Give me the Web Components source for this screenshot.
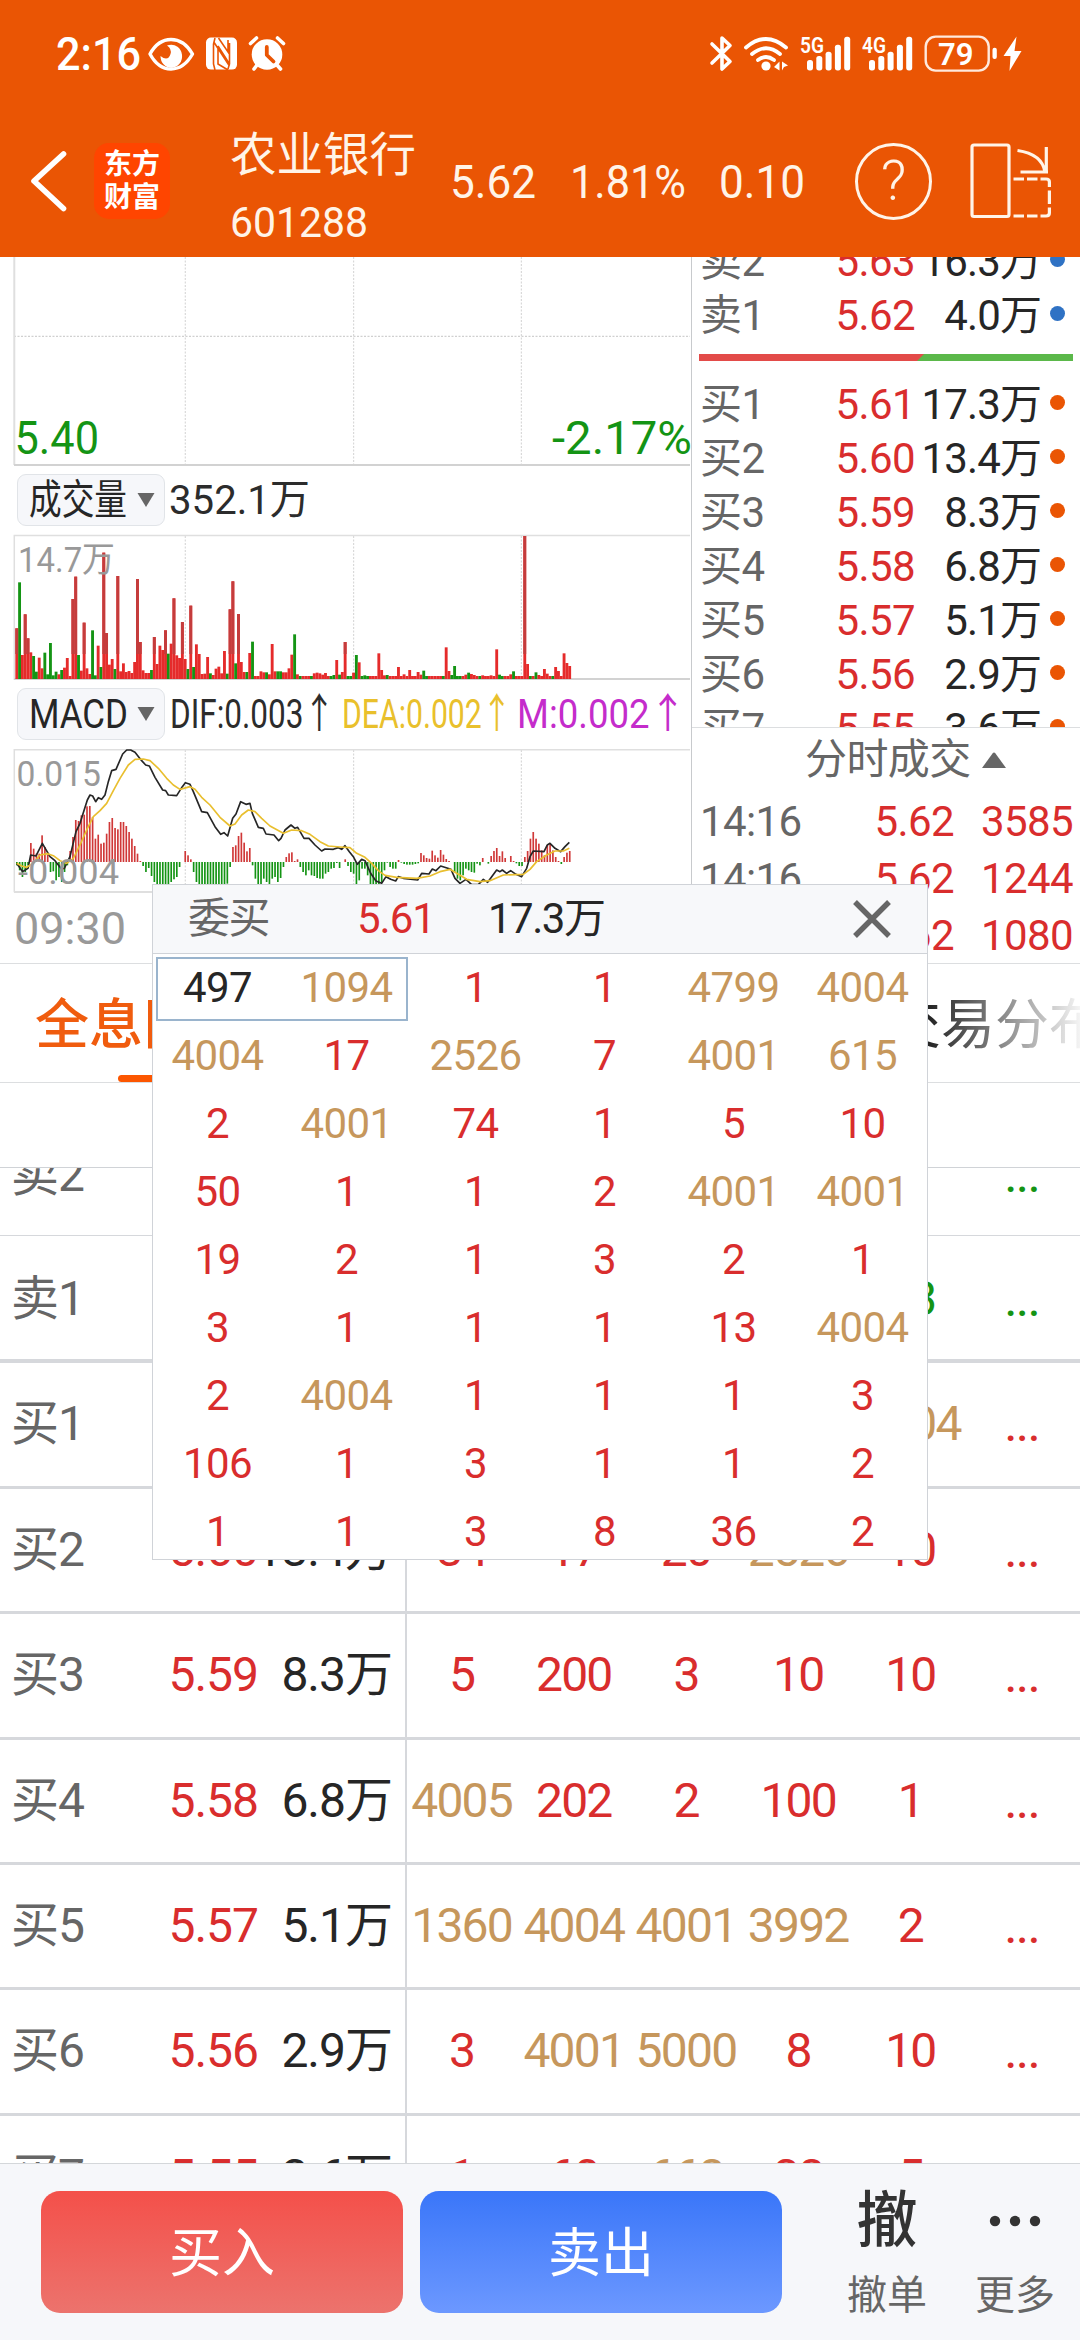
<!DOCTYPE html>
<html lang="zh-CN">
<head>
<meta charset="utf-8">
<title>农业银行 601288</title>
<style>
  html, body {
    margin: 0;
    padding: 0;
  }
  body {
    width: 1080px;
    height: 2340px;
    overflow: hidden;
    background: #fff;
    color: #262626;
    font-family: Roboto, "Noto Sans CJK SC", sans-serif;
    --red: #d92d2d;
    --green: #149414;
    --gold: #c6975c;
    --gray: #666;
    --orange: #ea5504;
    --line: #d6d8dc;
  }
</style>
</head>
<body>
<stock-page></stock-page>

<script>
// text squeezed or stretched to a given advance width
class FitText extends HTMLElement {
  constructor() {
    super();
    this.attachShadow({ mode: "open" });
  }

  connectedCallback() {
    this.shadowRoot.innerHTML = `
      <style>
        :host { display: inline-block; white-space: nowrap; text-align: left; }
        span { display: inline-block; transform-origin: 0 50%; }
      </style>
      <span><slot></slot></span>`;
    const width = Number(this.getAttribute("w"));
    const span = this.shadowRoot.querySelector("span");
    this.style.width = width + "px";
    const natural = span.getBoundingClientRect().width;
    if (natural) span.style.transform = `scaleX(${width / natural})`;
  }
}
customElements.define("fit-text", FitText);

class StatusBar extends HTMLElement {
  constructor() {
    super();
    this.attachShadow({ mode: "open" });
  }

  signal(x, label) {
    const tops = [60, 56, 51.7, 44.7, 36.7];
    const bars = tops
      .map((y, i) => `<rect x="${x + 7 + i * 9.3}" y="${y}" width="6" height="${70.4 - y}" rx="2.6"/>`)
      .join("");
    return `<text x="${x}" y="53" font-size="22.5" font-weight="600" textLength="24" lengthAdjust="spacingAndGlyphs">${label}</text>${bars}`;
  }

  connectedCallback() {
    this.shadowRoot.innerHTML = `
      <style>
        :host { display: flex; height: 107px; color: #fff; }
        .time { padding-left: 56px; font-size: 46px; line-height: 109px; font-weight: 500; }
        svg { display: block; fill: #fff; font-family: Roboto, sans-serif; }
        .left { width: 150px; }
        .right { margin-left: auto; }
      </style>
      <span class="time"><fit-text w="85">2:16</fit-text></span>
      <svg class="left" height="107" viewBox="141 0 150 107">
        <path d="M150 54 Q158 39.5 171 39.5 Q184 39.5 192.500 54 Q184 69 171 69 Q158 69 150 54Z" fill="none" stroke="#fff" stroke-width="3.4" stroke-linejoin="round"/>
        <path d="M169 45 A10.800 11.500 0 1 1 160.500 56 Q168 62 170.500 54 Q172 49 167 45.500Z"/>
        <rect x="206" y="37.600" width="31" height="32" rx="5"/>
        <path d="M215 38 L213.500 44 V64 L215 70 M213.800 42 L229.500 66 M229.500 43 V64 L228 69 M218 46 V64 L228 70 M229.500 64 L218 46 M218.500 38 L228 52 V40" fill="none" stroke="#ea5504" stroke-width="1.600"/>
        <circle cx="267" cy="54.500" r="15.300"/>
        <path d="M250.500 43.500 L256.500 38 M283.500 43.500 L277.500 38 M257 65 L254 69 M277 65 L280.500 69" stroke="#fff" stroke-width="3.600" stroke-linecap="round"/>
        <path d="M266.800 47 V55 L273.500 61.500" fill="none" stroke="#ea5504" stroke-width="3.800" stroke-linecap="round" stroke-linejoin="round"/>
      </svg>
      <svg class="right" width="380" height="107" viewBox="700 0 380 107">
        <path d="M712 44 L730 61.500 L722 69 V38 L730 45.500 L712 63" fill="none" stroke="#fff" stroke-width="3.600" stroke-linejoin="round" stroke-linecap="round"/>
        <path d="M746 47.500 Q766 30.500 786 47.500 M752 54 Q766 42.500 780 54 M758 60 Q766 54 774 60" fill="none" stroke="#fff" stroke-width="3.800" stroke-linecap="round"/>
        <circle cx="766" cy="66" r="4.600"/>
        <path d="M779.500 61.500 V70.500 L774 67Z M782 61.500 L788 65.500 L784 67 L782 70.500Z"/>
        ${this.signal(800, "5G")}
        ${this.signal(862, "4G")}
        <rect x="925.700" y="36.600" width="63" height="34" rx="10" fill="none" stroke="#ffe9dc" stroke-width="2.400"/>
        <rect x="992.500" y="47.700" width="4.300" height="11.300" rx="2"/>
        <text x="938" y="64.700" font-size="31" font-weight="600" textLength="35.500" lengthAdjust="spacingAndGlyphs">79</text>
        <path d="M1016.500 36.500 L1003.500 56 H1010.500 L1009.500 71 L1021.500 51 H1014.500Z"/>
      </svg>`;
  }
}
customElements.define("status-bar", StatusBar);

class StockTitle extends HTMLElement {
  constructor() {
    super();
    this.attachShadow({ mode: "open" });
  }

  connectedCallback() {
    this.shadowRoot.innerHTML = `
      <style>
        :host { display: flex; align-items: center; height: 150px; box-sizing: border-box; padding-bottom: 2px; color: #fff4e8; }
        svg { display: block; flex: none; }
        .back { margin-left: 30px; }
        .logo {
          display: flex; flex-direction: column; align-items: center; justify-content: center;
          width: 76px; height: 76px; margin-left: 26px; border-radius: 15px;
          background: #ff4500; color: #fff;
          font: 700 28px/33px "Noto Sans CJK SC", sans-serif;
        }
        .logo span { position: relative; top: -2px; }
        .name { width: 186px; margin-left: 60px; font-size: 46.5px; line-height: 68px; padding-top: 13px; }
        .code { font-size: 43px; line-height: 66px; }
        .quote { display: flex; margin-left: 34px; font-size: 47px; gap: 33.500px; }
        .help {
          display: flex; align-items: center; justify-content: center; box-sizing: border-box;
          width: 77px; height: 77px; margin-left: 50px; border: 3px solid #fff4e8; border-radius: 50%;
          font-size: 56px; font-weight: 300;
        }
        .turn { margin-left: 37px; }
      </style>
      <svg class="back" width="38" height="62" viewBox="0 0 38 62" fill="none" stroke="#fff" stroke-width="5.600" stroke-linecap="round" stroke-linejoin="round">
        <path d="M33.500 4 L4 31 L33.500 58.500"/>
      </svg>
      <div class="logo"><span>东方</span><span>财富</span></div>
      <div class="name">
        <div>农业银行</div>
        <div class="code"><fit-text w="138">601288</fit-text></div>
      </div>
      <div class="quote">
        <fit-text w="86">5.62</fit-text>
        <fit-text w="116">1.81%</fit-text>
        <fit-text w="86">0.10</fit-text>
      </div>
      <div class="help">?</div>
      <svg class="turn" width="84" height="78" viewBox="969 142 84 78" fill="none" stroke="#fff4e8" stroke-width="3.200">
        <rect x="972" y="145" width="37" height="71.500" rx="2"/>
        <path d="M1017.500 150.500 Q1042 154 1045 172 M1046.300 147 V173.500 M1020.500 172 H1048"/>
        <path d="M1013.500 179 H1024 M1027 179 H1037.500 M1040.500 179 H1046 Q1049.400 179 1049.400 182 V187 M1049.400 190.500 V204 M1049.400 207.500 V213 Q1049.400 216 1046 216 H1040.500 M1037.500 216 H1027 M1024 216 H1013.500"/>
      </svg>`;
  }
}
customElements.define("stock-title", StockTitle);

// minute volume, one value per bar; a negative value is a falling minute
const VOLUME = (() => {
  const v = {
    0: 152, 1: -290, 2: 72, 3: 194, 4: 122, 5: 80, 6: -69, 7: -22, 8: 64, 9: 32, 10: -79, 11: -14, 12: -108,
    13: -11, 14: -22, 15: 14, 16: -27, 17: 34, 18: 63, 20: 240, 21: 307, 22: -72, 23: 25, 24: 169, 25: 32, 26: 15,
    27: -146, 28: -11, 29: 100, 30: -36, 31: 379, 32: 138, 33: 43, 34: 60, 35: -30, 36: 309, 37: 23, 38: 47, 39: 21,
    40: 24, 41: 18, 42: 51, 43: 300, 44: 111, 45: 26, 46: 18, 47: 18, 48: -27, 49: 126, 50: 45, 51: 100, 52: 87,
    53: 146, 54: -76, 55: 106, 56: 242, 57: 71, 58: 63, 59: 171, 60: 60, 61: -30, 62: 220, 63: -36, 64: 104, 65: 75,
    66: 15, 67: 16, 68: 66, 69: -17, 70: 12, 71: 31, 72: 37, 73: 17, 74: 84, 75: -16, 76: 209, 77: 293, 78: -47,
    79: 195, 80: 51, 81: 21, 82: -21, 83: 78, 84: -112, 87: 23, 88: 20, 89: -20, 90: 14, 91: 105, 92: 23, 93: -23,
    94: -23, 95: 20, 96: 20, 97: 32, 98: 73, 99: -134, 100: 14, 101: -9, 105: -9, 106: 17, 107: 19, 108: 17, 109: 13,
    110: 18, 112: -9, 113: -12, 114: 57, 115: -13, 116: 21, 117: 111, 118: -9, 119: -9, 120: 19, 121: -72, 122: 50,
    123: -9, 124: -11, 125: -9, 129: 77, 130: 27, 131: 11, 132: -12, 136: 36, 138: 14, 140: 27, 143: 21, 144: 13,
    145: -25, 146: -9, 152: -9, 153: 95, 154: 24, 155: -12, 156: -39, 157: -9, 158: -9, 160: 13, 161: -19, 162: 15,
    163: 12, 165: -9, 166: 11, 169: 11, 171: 89, 172: -13, 173: -9, 176: 14, 177: -23, 181: 429, 182: 45, 183: -9,
    185: -20, 186: 12, 188: 30, 189: 16, 191: -9, 192: 36, 193: 24, 195: 77, 196: 48, 197: 39
  };
  return Array.from({ length: 198 }, (_, i) => v[i] || 9);
})();

const MACD = [
  -10, -25, -45, -30, -10, 57, 40, 25, 25, 80, 45, 22, -30, -28, -55, -45, -60, -30, -10, 33,
  75, 126, 123, 140, 142, 167, 168, 135, 70, 82, 55, 58, 85, 120, 132, 102, 98, 120, 120, 108,
  90, 70, 48, 25, 3, -12, -30, -18, -42, -60, -70, -70, -70, -70, -70, -60, -52, -45, -15, 0,
  33, 20, 8, -30, -60, -70, -70, -70, -70, -70, -70, -70, -70, -70, -70, -65, -15, 45, 50, 78,
  88, 58, 32, 42, -10, -50, -66, -66, -50, -60, -66, -50, -45, -60, -48, -15, 15, 26, 29, 3,
  8, -15, -30, -40, -25, -40, -42, -48, -50, -50, -35, -30, -20, -18, -3, -18, 0, 8, -12, -30,
  -35, -70, -55, -20, -20, -40, -70, -70, -70, -70, -60, -25, -2, -15, -20, -20, 6, -2, -6, -8,
  -8, -8, -6, -4, 27, 20, 12, 10, 34, 20, 13, 36, 22, 9, 3, 0, -30, -50, -55, -40,
  -20, -25, -30, -32, -5, -10, 12, 0, -5, 18, 33, 42, 18, 32, 12, 0, 18, 3, -4, -12,
  -12, 15, 33, 70, 90, 70, 55, 35, 20, 50, 55, 35, 15, 3, -6, 15, 28, 33
];

const DIF = "50,1030 68,1055 84,1045 92,1005 108,1008 127,970 150,1010 165,1022 185,1048 193,1045 210,1010 228,935 240,910 262,840 270,825 278,828 287,845 295,833 305,838 315,825 325,785 335,752 348,748 368,702 380,690 392,690 405,697 425,722 437,735 448,738 465,772 488,810 497,812 505,825 530,827 547,800 556,788 570,793 580,815 605,875 622,878 645,920 662,943 672,938 683,948 698,895 708,882 722,845 738,853 750,850 757,880 775,922 790,925 798,942 822,945 836,962 843,955 855,930 873,915 885,925 893,922 912,955 927,955 945,975 965,993 975,987 1000,988 1015,983 1025,988 1035,977 1048,995 1060,1010 1072,1033 1085,1018 1095,1022 1112,1060 1128,1083 1145,1090 1158,1070 1172,1078 1187,1083 1195,1070 1210,1075 1253,1080 1265,1060 1287,1062 1297,1047 1308,1052 1322,1038 1353,1048 1365,1075 1380,1090 1398,1078 1415,1094 1435,1094 1450,1078 1463,1087 1490,1050 1500,1055 1507,1050 1520,1060 1532,1052 1548,1063 1565,1070 1580,1045 1590,1010 1600,993 1632,995 1642,975 1650,970 1665,985 1682,995 1695,980 1708,967";
const DEA = "50,1030 65,1038 80,1042 100,1030 120,1005 143,1001 160,1007 180,1022 200,1030 220,1015 240,975 260,930 280,890 300,872 320,850 340,812 360,775 385,735 405,718 430,717 450,722 475,745 500,775 520,795 540,808 570,800 585,808 605,832 630,855 660,892 690,918 705,912 725,885 745,870 765,875 785,895 810,918 850,940 875,930 905,932 930,943 960,965 985,978 1020,981 1050,983 1070,1000 1095,1012 1115,1030 1135,1052 1155,1066 1190,1072 1250,1075 1290,1068 1320,1055 1350,1048 1370,1060 1400,1078 1440,1085 1470,1082 1510,1065 1570,1063 1590,1048 1610,1025 1640,1005 1665,993 1690,993 1708,985";

const STEP = 8.42;

class MinuteChart extends HTMLElement {
  constructor() {
    super();
    this.attachShadow({ mode: "open" });
  }

  grid(top, bottom) {
    return [185.3, 353.6, 521.4]
      .map(x => `<path d="M${x} ${top} V${bottom}" stroke="#d9d9d9" stroke-width="1.200" stroke-dasharray="2 1.500"/>`)
      .join("");
  }

  connectedCallback() {
    // bars are kept in thirds of a pixel
    const volume = VOLUME.map((v, i) =>
      `<rect x="${46 + i * STEP}" y="${432 - Math.abs(v)}" width="8.600" height="${Math.abs(v)}" fill="${v < 0 ? "#149414" : "#e52b2b"}"/>`).join("");
    const spikes = VOLUME.map((v, i) => v > 110
      ? `<rect x="${46 + i * STEP}" y="${432 - v}" width="8.600" height="${v - 75}" fill="#c43c3c"/>` : "").join("");
    const macd = MACD.map((v, i) =>
      `<rect x="${48 + i * STEP}" y="${v < 0 ? 1026 : 1026 - v}" width="5" height="${Math.abs(v)}" fill="${v < 0 ? "#149414" : "#d03838"}"/>`).join("");

    this.shadowRoot.innerHTML = `
      <style>
        :host { display: block; width: 691px; }
        svg { display: block; }
        svg text { font-family: Roboto, "Noto Sans CJK SC", sans-serif; }
        .bar { display: flex; align-items: center; height: 70px; box-sizing: border-box; padding-left: 17px; font-size: 41px; line-height: 52px; color: #2c2c2c; }
        .pill {
          display: flex; align-items: center; box-sizing: border-box; width: 148px; height: 52px; padding: 0 9px 0 11px;
          justify-content: space-between; border: 1px solid #e1e4e8; border-radius: 9px; background: #f6f7fa; color: #262626;
        }
        .pill svg { fill: #666; }
        .value { margin-left: 4px; }
        .dif { margin-left: 5px; }
        .dea { margin-left: 7px; color: #e9c02c; }
        .m { margin-left: 5px; color: #c42ccb; }
        .time { padding-left: 14px; font-size: 44px; line-height: 72px; color: #999; }
      </style>
      <svg width="691" height="208" viewBox="0 257 691 208" overflow="visible">
        ${this.grid(257, 465)}
        <path d="M14 336.300 H690" stroke="#d0d0d0" stroke-width="1.200" stroke-dasharray="2 1.500"/>
        <path d="M14.300 257 V465" stroke="#dfdfdf" stroke-width="2"/>
        <path d="M14 465 H690" stroke="#d2d2d2" stroke-width="2"/>
        <g fill="#149414" font-size="45.500">
          <text x="14.500" y="453.500" textLength="84.500" lengthAdjust="spacingAndGlyphs">5.40</text>
          <text x="552" y="453.500" textLength="140" lengthAdjust="spacingAndGlyphs">-2.17%</text>
        </g>
      </svg>
      <div class="bar">
        <div class="pill">
          <fit-text w="98">成交量</fit-text>
          <svg width="18" height="14"><path d="M0.500 0 H17.500 L9 14Z"/></svg>
        </div>
        <fit-text class="value" w="141">352.1万</fit-text>
      </div>
      <svg width="691" height="144" viewBox="0 535 691 144" overflow="visible">
        ${this.grid(536, 679)}
        <path d="M14.300 680 V535.500 H690" fill="none" stroke="#dfdfdf" stroke-width="1.500"/>
        <path d="M14 679 H690" stroke="#d2d2d2" stroke-width="1.800"/>
        <g transform="translate(0 535) scale(.33333)">${volume}${spikes}</g>
        <text x="18" y="571.700" font-size="35" fill="#999" textLength="97" lengthAdjust="spacingAndGlyphs">14.7万</text>
      </svg>
      <div class="bar">
        <div class="pill">
          <fit-text w="99">MACD</fit-text>
          <svg width="18" height="14"><path d="M0.500 0 H17.500 L9 14Z"/></svg>
        </div>
        <fit-text class="dif" w="165">DIF:0.003↑</fit-text>
        <fit-text class="dea" w="170">DEA:0.002↑</fit-text>
        <fit-text class="m" w="169">M:0.002↑</fit-text>
      </div>
      <svg width="691" height="144" viewBox="0 749 691 144">
        ${this.grid(750, 893)}
        <path d="M14.300 892.300 V749.800 H690" fill="none" stroke="#dfdfdf" stroke-width="1.500"/>
        <path d="M14 892 H690" stroke="#dfdfdf" stroke-width="1.800"/>
        <g transform="translate(0 520) scale(.33333)">
          ${macd}
          <polyline points="${DIF}" fill="none" stroke="#262626" stroke-width="5" stroke-linejoin="round"/>
          <polyline points="${DEA}" fill="none" stroke="#e9bf2f" stroke-width="5" stroke-linejoin="round"/>
        </g>
        <g font-size="35" fill="#999">
          <text x="16.500" y="786" textLength="84.500" lengthAdjust="spacingAndGlyphs">0.015</text>
          <text x="18" y="884" textLength="101" lengthAdjust="spacingAndGlyphs">-0.004</text>
        </g>
      </svg>
      <div class="time"><fit-text w="112">09:30</fit-text></div>`;
  }
}
customElements.define("minute-chart", MinuteChart);

class OrderBook extends HTMLElement {
  constructor() {
    super();
    this.attachShadow({ mode: "open" });
  }

  row([label, price, amount]) {
    const side = label[0] === "卖" ? "sell" : "buy";
    return `<div class="row ${side}"><span class="label">${label}</span><b>${price}</b><span class="amount">${amount}</span><i></i></div>`;
  }

  connectedCallback() {
    const sell = [["卖2", "5.63", "16.3万"], ["卖1", "5.62", "4.0万"]];
    const buy = [["买1", "5.61", "17.3万"], ["买2", "5.60", "13.4万"], ["买3", "5.59", "8.3万"], ["买4", "5.58", "6.8万"],
      ["买5", "5.57", "5.1万"], ["买6", "5.56", "2.9万"], ["买7", "5.55", "3.6万"]];
    const trades = [["14:16", "5.62", "3585"], ["14:16", "5.62", "1244"], ["14:16", "5.62", "1080"]];

    this.shadowRoot.innerHTML = `
      <style>
        :host { display: block; width: 388px; border-left: 1px solid #c8cacd; font-size: 42px; letter-spacing: -.6px; white-space: nowrap; }
        b { font-weight: 400; color: var(--red); text-align: right; }
        .book { height: 470px; overflow: hidden; border-bottom: 1px solid #dcdee0; }
        .sells { margin-top: -23px; }
        .row { display: grid; grid-template-columns: 112px 103px 125px 1fr; height: 54px; line-height: 55px; padding-left: 8px; }
        .label { color: var(--gray); }
        .amount { text-align: right; margin-right: -1px; }
        .row .amount { letter-spacing: -.9px; }
        i { width: 15px; height: 15px; border-radius: 50%; margin: 18px 0 0 10px; background: #ea5504; }
        .sell i { background: #2f72c4; }
        .ratio { height: 7px; margin: 12px 7px 16px 7px; background: #5bb84a; }
        .ratio div { width: 225px; height: 7px; background: #e34b49; clip-path: polygon(0 0, 100% 0, 218px 100%, 0 100%); }
        .head { display: flex; align-items: center; height: 64px; padding-left: 113px; gap: 11px; color: var(--gray); }
        .head span { line-height: 64px; }
        .trade { display: grid; grid-template-columns: 112px 142px 1fr; height: 57px; line-height: 59px; padding: 0 7px 0 8px; }
        .trade span { color: var(--gray); }
      </style>
      <div class="book">
        <div class="sells">${sell.map(this.row).join("")}</div>
        <div class="ratio"><div></div></div>
        ${buy.map(this.row).join("")}
      </div>
      <div class="head"><span>分时成交</span><svg width="24" height="16" fill="#666"><path d="M0 16 L10.500 1.500 Q12 -.5 13.500 1.500 L24 16Z"/></svg></div>
      ${trades.map(([t, p, n]) => `<div class="trade"><span>${t}</span><b>${p}</b><b>${n}</b></div>`).join("")}`;
  }
}
customElements.define("order-book", OrderBook);

class TabStrip extends HTMLElement {
  constructor() {
    super();
    this.attachShadow({ mode: "open" });
  }

  connectedCallback() {
    this.shadowRoot.innerHTML = `
      <style>
        :host {
          display: flex; justify-content: space-between; position: relative; height: 120px; box-sizing: border-box;
          border-top: 1px solid #dcdee0; border-bottom: 1px solid #dcdee0; overflow: hidden;
          font-size: 54px; line-height: 124px; color: #262626; white-space: nowrap;
        }
        .tab { display: flex; flex-direction: column; align-items: center; margin-left: 35px; height: 118px; color: #f05c0e; font-weight: 500; }
        .tab span { height: 111px; }
        .tab i { width: 50px; height: 7px; border-radius: 4px; background: #fc5600; }
        .next { margin-right: -23px; }
        .fade { position: absolute; right: 0; top: 0; width: 150px; height: 118px; background: linear-gradient(to right, rgba(255,255,255,0), rgba(255,255,255,.95)); }
      </style>
      <div class="tab"><span>全息队列</span><i></i></div>
      <div class="next">交易分布</div>
      <div class="fade"></div>`;
  }
}
customElements.define("tab-strip", TabStrip);

class QueueTable extends HTMLElement {
  constructor() {
    super();
    this.attachShadow({ mode: "open" });
  }

  connectedCallback() {
    const rows = [
      ["卖2", "", "", ["", "", "", "", ""]],
      ["卖1", "", "", ["", "", "", "", "13"]],
      ["买1", "", "", ["", "", "", "", "4004"]],
      ["买2", "5.60", "13.4万", ["34", "17", "20", "2526", "10"]],
      ["买3", "5.59", "8.3万", ["5", "200", "3", "10", "10"]],
      ["买4", "5.58", "6.8万", ["4005", "202", "2", "100", "1"]],
      ["买5", "5.57", "5.1万", ["1360", "4004", "4001", "3992", "2"]],
      ["买6", "5.56", "2.9万", ["3", "4001", "5000", "8", "10"]],
      ["买7", "5.55", "3.6万", ["1", "60", "668", "28", "5"]]
    ];
    const cell = n => `<span class="${n >= 500 ? "big" : ""}">${n}</span>`;

    this.shadowRoot.innerHTML = `
      <style>
        :host { display: block; height: 1080px; overflow: hidden; font-size: 48px; letter-spacing: -1px; white-space: nowrap; }
        .space { height: 84px; border-bottom: 1px solid #d0d3d7; }
        .list { height: 995px; overflow: hidden; }
        .row {
          display: grid; grid-template-columns: 11px 146px 101px 134px 15px repeat(5, 112.2px) 1fr;
          height: 125.4px; line-height: 121px; box-sizing: border-box; border-bottom: 3px solid var(--line);
        }
        .row:first-child { margin-top: -57px; border-bottom-width: 1px; line-height: 127px; }
        .row:nth-child(2) { border-bottom-width: 4px; height: 127px; line-height: 125px; }
        .label { color: var(--gray); grid-column: 2; }
        .price { color: var(--red); text-align: right; }
        .amount { display: flex; justify-content: flex-end; }
        .edge { border-right: 2px solid var(--line); margin-bottom: -3px; }
        .q { display: contents; color: var(--red); }
        .q span { text-align: center; letter-spacing: -1.800px; margin-left: -3px; }
        .q .big { color: var(--gold); }
        .sell .q { color: var(--green); }
        .q .more { font-size: 42px; font-weight: 500; letter-spacing: 0; padding-top: 3px; }
      </style>
      <div class="space"></div>
      <div class="list">${rows.map(([label, price, amount, q]) => `
        <div class="row ${label[0] === "卖" ? "sell" : ""}">
          <span class="label">${label}</span><span class="price">${price}</span><span class="amount">${amount}</span>
          <span class="edge"></span><div class="q">${q.map(cell).join("")}<span class="more">...</span></div>
        </div>`).join("")}
      </div>`;
  }
}
customElements.define("queue-table", QueueTable);

class QueuePopup extends HTMLElement {
  constructor() {
    super();
    this.attachShadow({ mode: "open" });
  }

  connectedCallback() {
    const orders = [
      497, 1094, 1, 1, 4799, 4004,
      4004, 17, 2526, 7, 4001, 615,
      2, 4001, 74, 1, 5, 10,
      50, 1, 1, 2, 4001, 4001,
      19, 2, 1, 3, 2, 1,
      3, 1, 1, 1, 13, 4004,
      2, 4004, 1, 1, 1, 3,
      106, 1, 3, 1, 1, 2,
      1, 1, 3, 8, 36, 2
    ];
    this.shadowRoot.innerHTML = `
      <style>
        :host {
          display: block; position: absolute; left: 152px; top: 884px; width: 776px; height: 676px; box-sizing: border-box;
          border: 1px solid #d0d3d8; background: #fff; overflow: hidden; font-size: 42px; letter-spacing: -.6px;
        }
        header { display: flex; align-items: center; height: 68px; line-height: 72px; padding: 0 36px 0 35px; border-bottom: 1px solid #d0d3d8; background: #f7f8fa; letter-spacing: -1.500px; }
        header span { color: var(--gray); width: 169px; }
        header b { font-weight: 400; color: var(--red); width: 131px; letter-spacing: -1px; }
        header svg { margin-left: auto; }
        .grid { display: grid; grid-template-columns: repeat(6, 1fr); line-height: 68px; text-align: center; color: var(--red); }
        .big { color: var(--gold); }
        .mine { color: #262626; }
        .mark { position: absolute; left: 3px; top: 72px; width: 252px; height: 64px; box-sizing: border-box; border: 2px solid #9ab4cd; }
      </style>
      <header>
        <span>委买</span><b>5.61</b>17.3万
        <svg width="38" height="38" stroke="#666" stroke-width="5.400"><path d="M2 2 L36 36 M36 2 L2 36"/></svg>
      </header>
      <div class="grid">${orders.map((n, i) => `<div class="${i === 0 ? "mine" : n >= 500 ? "big" : ""}">${n}</div>`).join("")}</div>
      <div class="mark"></div>`;
  }
}
customElements.define("queue-popup", QueuePopup);

class TradeBar extends HTMLElement {
  constructor() {
    super();
    this.attachShadow({ mode: "open" });
  }

  connectedCallback() {
    this.shadowRoot.innerHTML = `
      <style>
        :host { display: flex; height: 177px; box-sizing: border-box; padding: 27px 0 0 41px; border-top: 1px solid #d4d7da; background: #f6f7fa; }
        button {
          width: 362px; height: 122px; margin: 0 17px 0 0; padding: 0; border: 0; border-radius: 19px; color: #fff;
          font: 400 53px/126px Roboto, "Noto Sans CJK SC", sans-serif; background: linear-gradient(#f4504a, #ec736d);
        }
        .sell { background: linear-gradient(#3a76f9, #6c98ff); }
        .item { display: flex; flex-direction: column; align-items: center; width: 128px; font-size: 40px; line-height: 52px; color: var(--gray); }
        .icon { display: flex; align-items: center; justify-content: center; height: 60px; margin-bottom: 19px; font-size: 61px; line-height: 62px; font-weight: 500; color: #333; }
        .cancel { margin-left: 24px; }
        .icon svg { fill: #333; }
      </style>
      <button>买入</button>
      <button class="sell">卖出</button>
      <div class="item cancel"><div class="icon">撤</div>撤单</div>
      <div class="item"><div class="icon"><svg width="52" height="12"><circle cx="6" cy="6" r="5.200"/><circle cx="26" cy="6" r="5.200"/><circle cx="46" cy="6" r="5.200"/></svg></div>更多</div>`;
  }
}
customElements.define("trade-bar", TradeBar);

class StockPage extends HTMLElement {
  constructor() {
    super();
    this.attachShadow({ mode: "open" });
  }

  connectedCallback() {
    this.shadowRoot.innerHTML = `
      <style>
        :host { display: flex; flex-direction: column; position: relative; width: 1080px; height: 2340px; overflow: hidden; }
        .top { flex: none; height: 257px; background: var(--orange); }
        .market { display: flex; flex: none; height: 706px; }
        tab-strip, queue-table, trade-bar { flex: none; }
      </style>
      <div class="top">
        <status-bar></status-bar>
        <stock-title></stock-title>
      </div>
      <div class="market">
        <minute-chart></minute-chart>
        <order-book></order-book>
      </div>
      <tab-strip></tab-strip>
      <queue-table></queue-table>
      <trade-bar></trade-bar>
      <queue-popup></queue-popup>`;
  }
}
customElements.define("stock-page", StockPage);
</script>
</body>
</html>
